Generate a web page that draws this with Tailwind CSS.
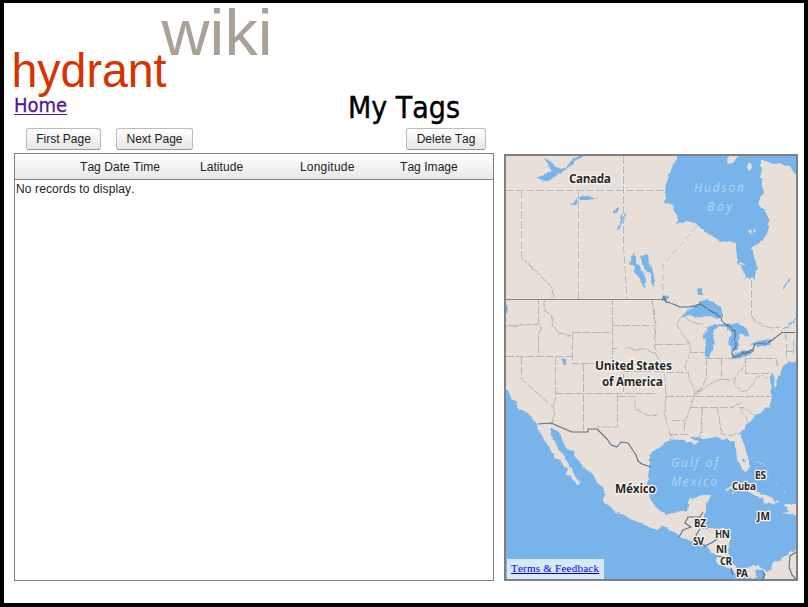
<!DOCTYPE html>
<html lang="en">
<head>
<meta charset="utf-8">
<title>My Tags</title>
<script src="https://cdn.jsdelivr.net/npm/@tailwindcss/browser@4"></script>
</head>
<body class="bg-white">
<div class="w-[808px] h-[607px] border-x-4 border-t-[3px] border-b-4 border-black bg-white overflow-hidden pl-[10px] font-['Liberation_Sans',Arial,sans-serif] text-xs text-[#222] [font-kerning:none]">
  <header class="h-[125px]">
    <svg class="block w-[270px] h-[88px]" viewBox="14 3 270 88" overflow="visible" font-family="Liberation Sans, Arial, sans-serif">
      <text x="161.500" y="55" font-size="65" fill="#aaa196" textLength="111" lengthAdjust="spacingAndGlyphs">wiki</text>
      <text x="11.500" y="87" font-size="47.500" fill="#d43500" textLength="155" lengthAdjust="spacingAndGlyphs">hydrant</text>
    </svg>
    <div class="flex w-[480px] h-[34px] font-['DejaVu_Sans_Condensed','DejaVu_Sans',sans-serif]">
      <a class="w-[334px] text-[20px] leading-[22px] pt-[3px] text-[#551a8b] underline decoration-1 underline-offset-2 [-webkit-text-stroke:0.3px]" href="#">Home</a>
      <h1 class="text-[30px] leading-[34px] text-black whitespace-nowrap [-webkit-text-stroke:0.4px]">My Tags</h1>
    </div>
  </header>
  <main class="flex items-end -mt-px">
    <section class="w-[480px]">
      <div class="flex pl-3 pr-2 pt-px h-[26px] items-start text-[#222]">
        <button class="w-[75px] h-[22px] rounded-[3px] border border-[#bbb] border-b-[#999] bg-linear-to-b from-white to-[#e6e6e6]">First Page</button>
        <button class="w-[77px] h-[22px] ml-[15px] rounded-[3px] border border-[#bbb] border-b-[#999] bg-linear-to-b from-white to-[#e6e6e6]">Next Page</button>
        <button class="w-[80px] h-[22px] ml-auto rounded-[3px] border border-[#bbb] border-b-[#999] bg-linear-to-b from-white to-[#e6e6e6]">Delete Tag</button>
      </div>
      <div class="h-[428px] border border-[#808080] bg-white">
        <div class="h-[26px] flex items-center border-b border-[#808080] bg-linear-to-b from-white to-[#e8e8e8] pl-[65px] pt-px tracking-[0.05px]">
          <span class="w-[120px]">Tag Date Time</span><span class="w-[100px]">Latitude</span><span class="w-[100px] tracking-[0.2px]">Longitude</span><span>Tag Image</span>
        </div>
        <p class="pl-px pt-px leading-4 tracking-[0.12px]">No records to display.</p>
      </div>
    </section>
    <section class="relative ml-[10px] w-[294px] h-[427px] border-2 border-[#808080] overflow-hidden">
      <svg class="block w-[290px] h-[423px]" viewBox="506 156 290 423" stroke-linejoin="round">
        <defs>
          <filter id="coast" filterUnits="userSpaceOnUse" x="496" y="146" width="310" height="443">
            <feTurbulence type="fractalNoise" baseFrequency="0.22" numOctaves="2" seed="4" result="n"/>
            <feDisplacementMap in="SourceGraphic" in2="n" scale="3.5" xChannelSelector="R" yChannelSelector="G"/>
          </filter>
          <filter id="line" filterUnits="userSpaceOnUse" x="496" y="146" width="310" height="443">
            <feTurbulence type="fractalNoise" baseFrequency="0.15" numOctaves="1" seed="9" result="n"/>
            <feDisplacementMap in="SourceGraphic" in2="n" scale="4" xChannelSelector="R" yChannelSelector="G"/>
          </filter>
        </defs>
        <rect x="506" y="156" width="290" height="423" fill="#78b4ea"/>
        <g filter="url(#coast)">
        <!-- mainland -->
        <path fill="#e8e0d8" d="M498 148H678V156L676 160 673 163 672 168 669 173 668 179 666 184 665 191 666 197 665 204 668 203 673 205 674 211 677 215 678 220 676 224 683 222 687 221 692 222 697 225 701 228 705 232 711 235 718 240 720 242 728 241 736 243 736 248 737 256 737 263 741 266 743 272 746 276 744 280 748 277 751 280 752 277 755 279 755 274 757 270 756 262 754 257 753 250 752 247 758 244 763 240 767 234 769 227 768 218 765 210 761 207 758 205 760 200 764 192 762 186 762 181 760 177 762 170 760 165 760 161 766 161 773 164 778 163 778 161 783 165 790 166 792 170 796 175 804 178V361H796L789 362 783 366 781 371 780 376 776 380 777 385 775 388 774 384 775 378 773 373 770 374 770 381 772 387 770 391 772 395 771 401 769 407 764 409 762 412 755 416 751 421 745 427 741 432 741 437 744 444 746 451 749 461 749 468 745 472 742 469 740 464 737 459 736 450 734 442 730 441 727 438 723 440 718 437 710 438 703 439 697 437 691 437 694 440 698 441 695 445 691 443 687 443 683 440 678 439 671 440 666 442 661 447 657 449 652 452 649 456 650 462 649 469 648 480 648 490 650 498 655 506 661 511 666 514 674 513 681 511 687 511 689 506 689 499 694 497 703 495 710 495 709 500 706 505 706 511 704 515 703 525 702 529 707 529 714 529 722 528 730 530 730 536 729 544 728 550 729 557 733 563 737 568 742 570 747 568 752 566 758 566 763 569 767 572 771 569 773 562 779 560 786 556 790 552 793 553 796 549 804 545V587H762L764 579 765 575 762 571 758 569 755 572 757 577 751 579 748 575 741 577 733 572 730 568 724 567 718 565 716 561 717 556 710 550 706 546 699 542 691 541 681 538 676 534 670 530 663 526 657 530 648 527 638 522 630 519 624 515 615 512 610 506 604 503 603 499 606 494 602 487 597 482 593 474 586 469 580 463 579 460 575 457 573 452 567 449 563 442 561 436 557 430 551 428 551 435 555 442 557 448 562 453 566 459 569 465 573 472 576 478 581 483 580 485 577 484 571 477 566 474 567 468 563 465 560 460 554 458 554 454 550 449 547 444 544 440 542 435 538 430 537 424 532 418 528 413 519 410 517 404 512 399 509 393 506 387 498 383Z"/>
        <g fill="#e8e0d8">
          <path d="M731 153 727 161 728 164 733 163 738 156V153ZM748 163 751 163 752 167 749 171 747 168ZM748 231l4-2-1 5zM739 262l5 1 1 2-5-1zM754 228l2 2-3 4z"/>
          <path d="M723 492 727 488 734 485 743 486 754 488 760 493 768 496 775 500 780 502 770 504 762 503 764 499 756 496 749 492 740 488 731 488 726 491ZM731 493l3-1 0 2zM783 504l19 0 0 12-13-2-8-1 8-1-2-5z"/>
        </g>
        <g fill="#a9c9e3"><path d="M755 463l5-1 5 3-1 1-5-3zM766 473l4 5-1 0zM775 481l3 5-1 0zM762 471l4 4-3-1zM783 489l3 4-2-1z"/></g>
        <!-- lakes and inlets -->
        <g fill="#78b4ea">
          <path d="M544 158 552 162 556 167 562 169 567 166 573 159 579 156H584L577 160 570 166 562 172 556 175 552 180 545 181 535 177 541 176 547 174 551 170 548 164Z"/>
          <path d="M571 204 577 199 583 195 589 197 600 198 588 200 580 200 575 206ZM614 209 619 207 618 211 614 215ZM620 217 626 212 624 219 620 228 616 231 619 225ZM634 252 636 257 636 263 641 268 646 279 645 289 642 284 638 276 633 271 636 266 629 264ZM640 256 648 254 649 264 653 273 652 275 645 269 642 262ZM650 263 652 268 655 281 654 287 651 282 652 277ZM697 289l5-1 1 7-5 0zM783 287l6-8 2 0-5 6-3 5zM561 358l4 1 2 6-3 0zM504 301l4 6-1 8-3 1zM663 296l6 0-3 7-3-3z"/>
          <path d="M680 318 686 312 695 306 700 301 707 300 715 303 721 307 723 317 717 319 710 316 702 317 695 318 690 315Z"/>
          <path d="M703 335 708 327 715 324 723 324 728 324 738 323 746 328 750 334 746 337 740 333 738 342 738 350 732 351 728 341 732 333 726 327 719 326 713 332 714 340 713 350 709 358 705 357 705 347 706 338 703 340Z"/>
          <path d="M732 355 741 351 754 349 751 354 742 358 734 359ZM751 344 756 341 771 339 769 345 757 347ZM780 332l8-7 8-7 0 2-8 7zM742 460l2-2 1 4-2 1z"/>
        </g>
        </g>
        <!-- state and province borders -->
        <g fill="none" stroke="#f2eeea" stroke-width="1.600">
          <path d="M506 190.500H665M521.500 191V257M578.500 191V299M623.500 156V245L627 299M697 226 663 265V297M751.500 280V316"/>
        </g>
        <g fill="none" stroke="#b9b8b7" stroke-width="1" stroke-dasharray="8 2">
          <path d="M506 190.500H665M521.500 191V257M578.500 191V299M623.500 156V245L627 299M697 226 663 265V297M751.500 280V316M538.500 324V300M538.500 335V356M506 356.500H573M572.500 332.500H612M572.500 332V363.500H612.500V299M583.500 364V430M521.500 357V379L553 407M555.500 357V399M555 393.500H656M612 325.500H654M623.500 371.500H661M623.500 364V393M617.500 394V427H596M618 396.500H635V410M655 344.500H686M666 396.500H772M666 372.500H685M690 352.500H705M706.500 358V378M705 358.500H733M721.500 359V379M745 358.500H776M745.500 359V373.500H772M690 407.500H733M672 420.500H685M670 434.500H690M786 351.500H796"/>
        </g>
        <g fill="none" stroke="#b3b2b1" stroke-width="1" stroke-dasharray="8 1" filter="url(#line)">
          <path d="M521.500 257 530 265 541 276 552 288 553 299M751.500 316 757 323 770 328 780 327M506 327 520 325 539 324 541 328 538 335M543 299 545 310 553 319 552 326 559 333 571 336M553 407 555 412 551 425M555.500 399 553 407M612 348.500 644 349 656 354M635 410 645 414 658 416"/>
          <path d="M652 299 654 316 656 327 654 345 659 360 665 378 666 396 664 413 670 431 672 440M681 315 677 326 683 334 690 345 691 352 685 367 690 381 696 392 691 405 685 422 684 431M706.500 378 700 390 694 396M721.500 379 712 383 705 387 697 394M721 379 729 380 735 377 743 366 745 359M776 358 778 366M735 377 735 386 742 392 748 390 754 381 762 374 768 379M733 407 741 402 746 397M730 407 745 408 755 416M740 408 750 424M717 408 722 432M702.500 408 700 438M720 433 728 436 740 434M786.500 332V354L790 363M795 339 793 354M685 317 690 321 702 325 706 329"/>
        </g>
        <!-- national borders -->
        <path d="M506 299.500H662" stroke="#878787" stroke-width="1.200"/>
        <g fill="none" stroke="#5f6f82" stroke-width="1.100">
          <path d="M662 299.500 664 296 666 302 673 304 680 307 690 307 700 304 711 311 721 317 724 323 731 328 735 331 736 346 732 351 732 358 742 354 753 351 755 343 769 343 777 336 783 332.500H796" filter="url(#line)"/>
          <path d="M538 424 551 423 572 432H588V429L597 429 607 439 611 445 617 447 621 442 628 443 636 455 638 461 642 464 651 467M679 537 683 530 691 527 685 523 688 517H700L703 512M700 529 696 535 699 540 705 546 713 542 721 536 730 533M716 556 726 557M731 568 733 575M762 570 765 575 762 579M796 552 790 556 789 567 792 575 796 579"/>
        </g>
        <g font-family="Open Sans, Noto Sans, sans-serif" font-style="italic" font-size="12" fill="#b0d5f5" lengthAdjust="spacing">
          <text x="694" y="191.500" textLength="50">Hudson</text><text x="707" y="210.500" textLength="25">Bay</text>
          <text x="671" y="467" textLength="47">Gulf of</text><text x="671" y="486" textLength="46">Mexico</text>
        </g>
        <g font-family="Open Sans, Noto Sans, sans-serif" font-weight="700" font-size="12" fill="#262626" stroke="#f7f3ee" stroke-width="2.500" paint-order="stroke">
          <text x="569" y="183" textLength="42">Canada</text>
          <text x="595" y="370" textLength="77">United States</text>
          <text x="602" y="385.500" textLength="61">of America</text>
          <text x="615" y="493" textLength="41">México</text>
          <g font-size="10">
            <text x="755" y="479" textLength="11">BS</text><text x="732" y="490" textLength="24">Cuba</text><text x="757" y="520" textLength="13">JM</text>
            <text x="694" y="527" textLength="12">BZ</text><text x="715" y="538" textLength="15">HN</text><text x="693" y="545" textLength="11">SV</text>
            <text x="716" y="553" textLength="11">NI</text><text x="720" y="565" textLength="12">CR</text><text x="736" y="577" textLength="12">PA</text>
          </g>
        </g>
      </svg>
      <div class="absolute left-px bottom-0 w-[97px] h-5 bg-[#d7e8f9] pl-1 leading-[19px] text-[11px] tracking-[0.24px] whitespace-nowrap font-['Liberation_Serif','Times_New_Roman',serif]"><a class="text-[#0000ee] underline" href="#">Terms &amp; Feedback</a></div>
    </section>
  </main>
</div>
</body>
</html>
